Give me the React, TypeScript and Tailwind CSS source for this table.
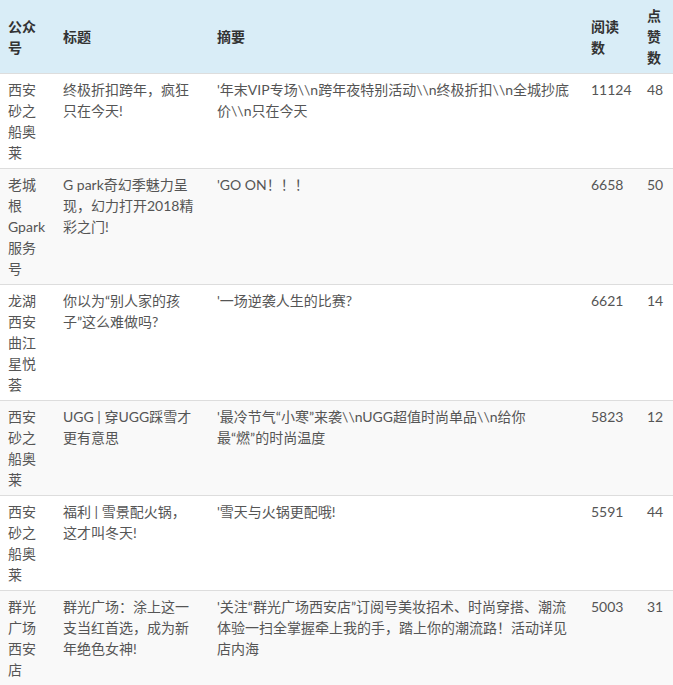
const rows = [
  {
    account: "西安砂之船奥莱",
    title: "终极折扣跨年，疯狂只在今天!",
    digest: "'年末VIP专场\\\\n跨年夜特别活动\\\\n终极折扣\\\\n全城抄底价\\\\n只在今天",
    reads: 11124,
    likes: 48,
  },
  {
    account: "老城根Gpark服务号",
    title: "G park奇幻季魅力呈现，幻力打开2018精彩之门!",
    digest: "'GO ON！！！",
    reads: 6658,
    likes: 50,
  },
  {
    account: "龙湖西安曲江星悦荟",
    title: "你以为“别人家的孩子”这么难做吗?",
    digest: "'一场逆袭人生的比赛?",
    reads: 6621,
    likes: 14,
  },
  {
    account: "西安砂之船奥莱",
    title: "UGG | 穿UGG踩雪才更有意思",
    digest: "'最冷节气“小寒”来袭\\\\nUGG超值时尚单品\\\\n给你最“燃”的时尚温度",
    reads: 5823,
    likes: 12,
  },
  {
    account: "西安砂之船奥莱",
    // the source wraps this one after the comma
    title: "福利 | 雪景配火锅，\n这才叫冬天!",
    digest: "'雪天与火锅更配哦!",
    reads: 5591,
    likes: 44,
  },
  {
    account: "群光广场西安店",
    title: "群光广场：涂上这一支当红首选，成为新年绝色女神!",
    digest: "'关注“群光广场西安店”订阅号美妆招术、时尚穿搭、潮流体验一扫全掌握牵上我的手，踏上你的潮流路！活动详见店内海",
    reads: 5003,
    likes: 31,
  },
];

export default function App() {
  return (
    <div className="w-[673px] bg-white font-['Lato','Noto_Sans_CJK_SC',sans-serif] text-[14px] leading-[21px] text-[#555]">
      <table className="w-full table-fixed border-collapse">
        <colgroup>
          <col className="w-[55px]" />
          <col className="w-[154px]" />
          <col className="w-[374px]" />
          <col className="w-[56px]" />
          <col className="w-[34px]" />
        </colgroup>
        <thead>
          <tr className="bg-[#d9edf7]">
            {["公众号", "标题", "摘要", "阅读数", "点赞数"].map((h) => (
              <th
                key={h}
                className="border-b border-[#ddd] px-2 py-[5px] text-left align-middle font-bold text-[#333]"
              >
                {h}
              </th>
            ))}
          </tr>
        </thead>
        <tbody>
          {rows.map((r, i) => (
            <tr key={i} className={i % 2 === 1 ? "bg-[#f9f9f9]" : "bg-white"}>
              <td className="border-b border-[#ddd] px-2 py-[5px] align-top">{r.account}</td>
              <td className="border-b border-[#ddd] px-2 py-[5px] align-top whitespace-pre-line">{r.title}</td>
              <td className="border-b border-[#ddd] px-2 py-[5px] align-top">{r.digest}</td>
              <td className="border-b border-[#ddd] px-2 py-[5px] align-top">{r.reads}</td>
              <td className="border-b border-[#ddd] px-2 py-[5px] align-top">{r.likes}</td>
            </tr>
          ))}
        </tbody>
      </table>
    </div>
  );
}
